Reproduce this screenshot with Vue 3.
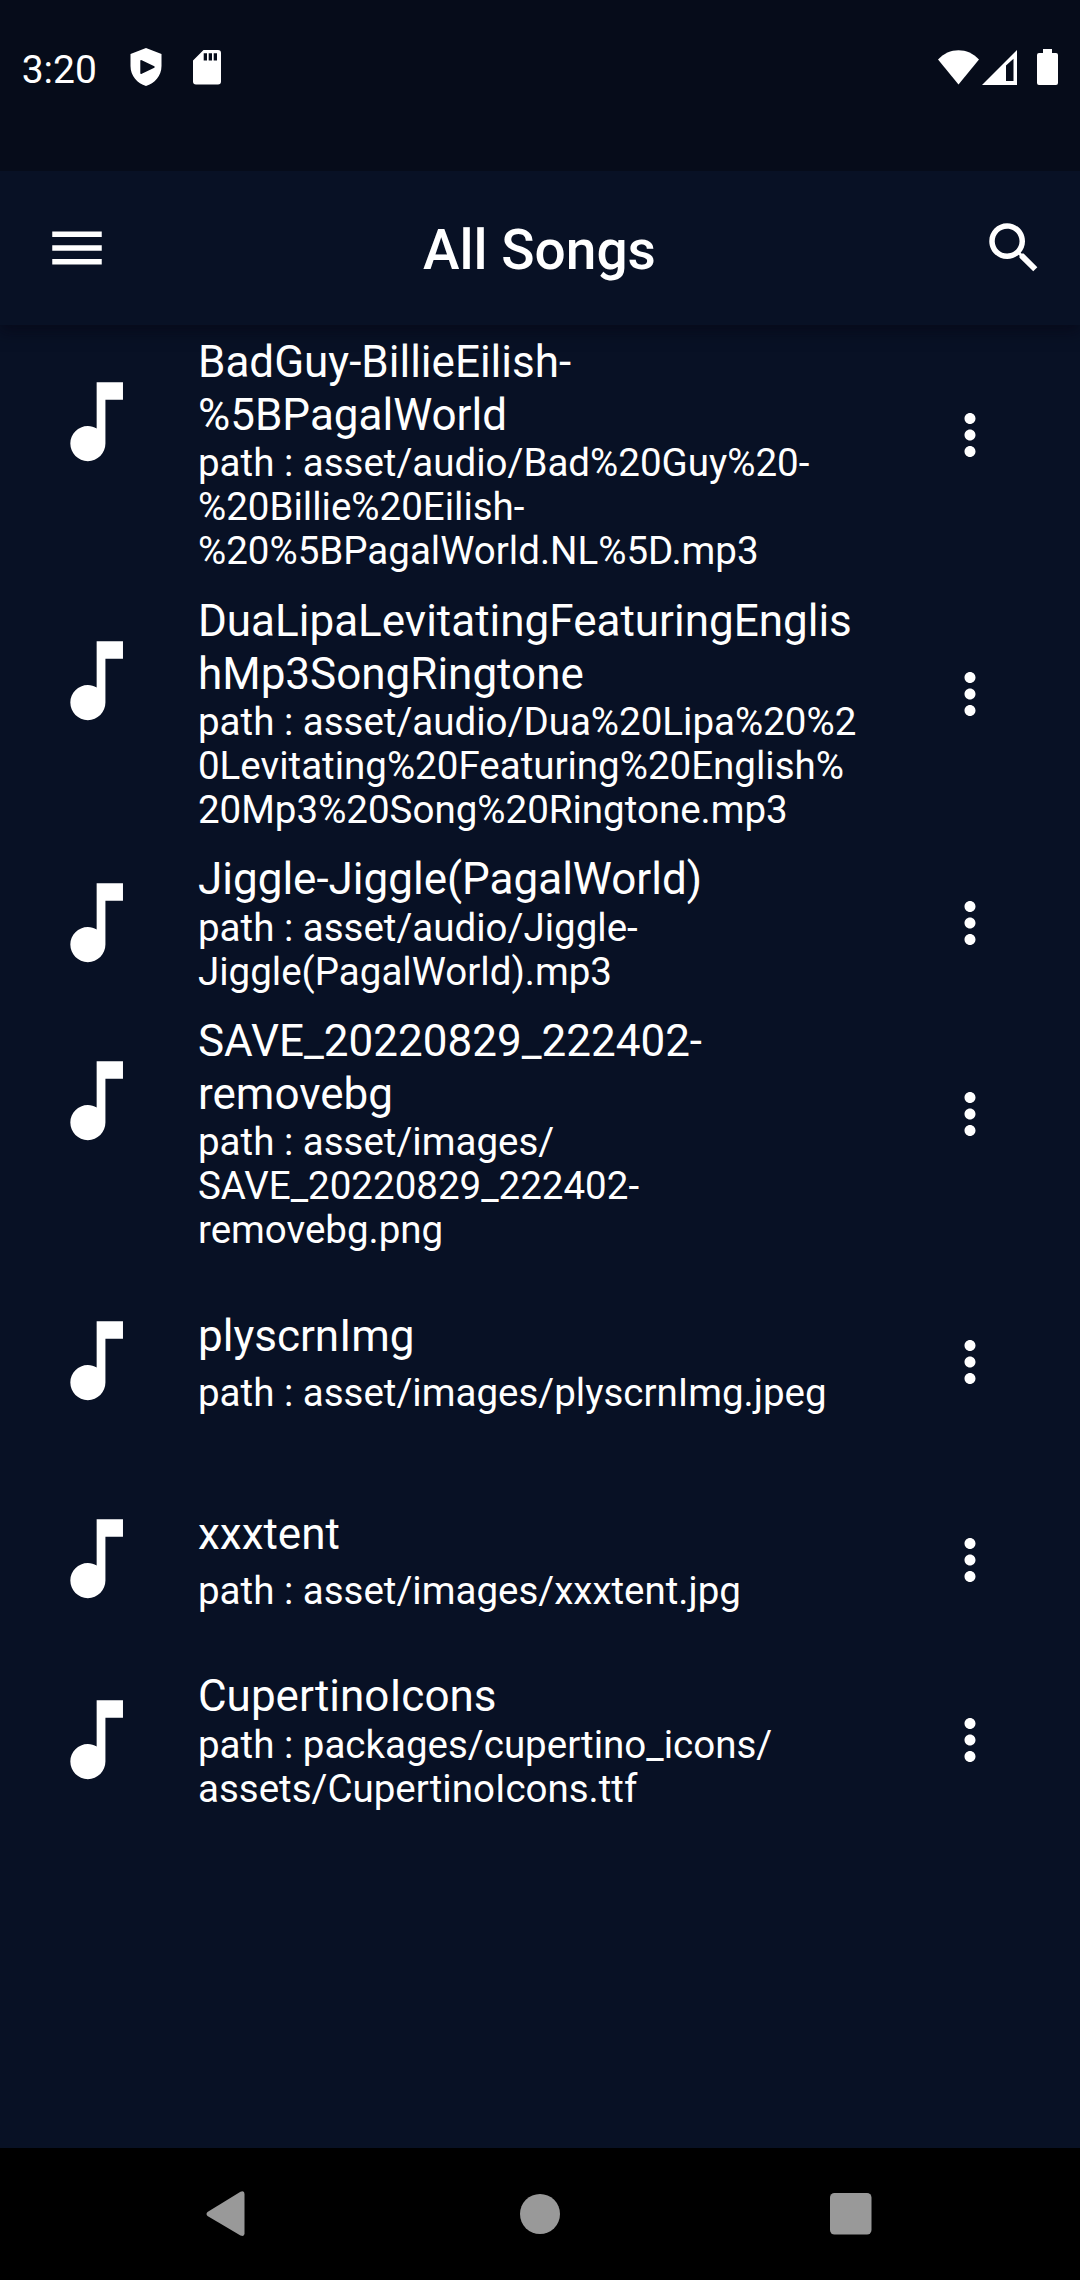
<script setup>
const songs = [
  { title: ['BadGuy-BillieEilish-', '%5BPagalWorld'], path: ['path : asset/audio/Bad%20Guy%20-', '%20Billie%20Eilish-', '%20%5BPagalWorld.NL%5D.mp3'], kind: 'tall' },
  { title: ['DuaLipaLevitatingFeaturingEnglis', 'hMp3SongRingtone'], path: ['path : asset/audio/Dua%20Lipa%20%2', '0Levitating%20Featuring%20English%', '20Mp3%20Song%20Ringtone.mp3'], kind: 'tall tight' },
  { title: ['Jiggle-Jiggle(PagalWorld)'], path: ['path : asset/audio/Jiggle-', 'Jiggle(PagalWorld).mp3'], kind: 'medium' },
  { title: ['SAVE_20220829_222402-', 'removebg'], path: ['path : asset/images/', 'SAVE_20220829_222402-', 'removebg.png'], kind: 'tall' },
  { title: ['plyscrnImg'], path: ['path : asset/images/plyscrnImg.jpeg'], kind: 'short' },
  { title: ['xxxtent'], path: ['path : asset/images/xxxtent.jpg'], kind: 'short' },
  { title: ['CupertinoIcons'], path: ['path : packages/cupertino_icons/', 'assets/CupertinoIcons.ttf'], kind: 'medium' },
]
</script>

<template>
  <div class="screen">
    <header class="status">
      <span class="clock">3:20</span>
      <svg class="shield" width="32" height="38" viewBox="0 0 32 38"><path fill="#fff" fill-rule="evenodd" d="M16 0 31.500 6V18C31.500 28 24.500 35.500 16 38 7.500 35.500.5 28 .5 18V6ZM11.800 12.300q-1.500-.8-1.500.8v11.800q0 1.500 1.500.8L24.300 19.800q1-.8 0-1.600Z"/></svg>
      <svg class="sd" width="28" height="35" viewBox="0 0 28 35"><path fill="#fff" fill-rule="evenodd" d="M10.500 0H25q3 0 3 3V31.500q0 3-3 3H3q-3 0-3-3V10.500ZM10.700 3.300v7.200h3.300V3.300ZM15.700 3.300v7.200h3.300V3.300ZM20.700 3.300v7.200h3.300V3.300Z"/></svg>
      <span class="grow"></span>
      <svg class="wifi" width="41" height="35" viewBox="0 0 41 35"><path fill="#fff" d="M0 9.500C11-3 30-3 41 9.500L20.500 34.500Z"/></svg>
      <svg class="signal" width="35" height="35" viewBox="0 0 35 35"><path fill="#fff" fill-rule="evenodd" d="M0 35 35 0V35ZM24 15.500V31H31.500V8.800Z"/></svg>
      <svg class="battery" width="21" height="36" viewBox="0 0 21 36"><path fill="#fff" d="M6 0h9v4h4q2 0 2 2V34q0 2-2 2H2q-2 0-2-2V6q0-2 2-2H6Z"/></svg>
    </header>
    <div class="appbar">
      <svg class="icon" viewBox="0 0 24 24"><path fill="#fff" d="M3 18h18v-2H3v2zm0-5h18v-2H3v2zm0-7v2h18V6H3z"/></svg>
      <h1>All Songs</h1>
      <svg class="icon" viewBox="0 0 24 24"><path fill="#fff" d="M15.500 14h-.79l-.28-.27C15.410 12.590 16 11.110 16 9.500 16 5.910 13.090 3 9.500 3S3 5.910 3 9.500 5.910 16 9.500 16c1.610 0 3.090-.59 4.230-1.570l.27.28v.79l5 4.990L20.490 19l-4.990-5zm-6 0C7.010 14 5 11.990 5 9.500S7.010 5 9.500 5 14 7.010 14 9.500 11.990 14 9.500 14z"/></svg>
    </div>
    <main class="list">
      <div v-for="song in songs" :key="song.title[0]" class="row" :class="song.kind">
        <svg class="note" viewBox="0 0 24 24"><path fill="#fff" d="M12 3v10.550c-.59-.34-1.270-.55-2-.55-2.210 0-4 1.790-4 4s1.790 4 4 4 4-1.790 4-4V7h4V3h-6z"/></svg>
        <div class="text">
          <div class="title"><div v-for="line in song.title" :key="line">{{ line }}</div></div>
          <div class="path"><div v-for="line in song.path" :key="line">{{ line }}</div></div>
        </div>
        <div class="more">
          <svg class="icon" viewBox="0 0 24 24"><path fill="#fff" d="M12 8c1.100 0 2-.9 2-2s-.9-2-2-2-2 .9-2 2 .9 2 2 2zm0 2c-1.100 0-2 .9-2 2s.9 2 2 2 2-.9 2-2-.9-2-2-2zm0 6c-1.100 0-2 .9-2 2s.9 2 2 2 2-.9 2-2-.9-2-2-2z"/></svg>
        </div>
      </div>
    </main>
    <nav class="nav">
      <svg class="back" width="40" height="46" viewBox="0 0 40 46"><path fill="#999" d="M1.500 21 34.500.8Q38.500-.8 38.500 3V42.500Q38.500 46 34.500 44.500L1.500 25Q-.5 23 1.500 21Z"/></svg>
      <svg class="home" width="40" height="40" viewBox="0 0 40 40"><circle cx="20" cy="20" r="20" fill="#999"/></svg>
      <svg class="recent" width="42" height="42" viewBox="0 0 42 42"><rect width="41.500" height="41.500" rx="4.500" fill="#999"/></svg>
    </nav>
  </div>
</template>

<style>
body { margin: 0; background: #081125; }
</style>

<style scoped>
.screen { display: flex; flex-direction: column; width: 1080px; height: 2280px; overflow: hidden; background: #081125; color: #fff; font-family: Roboto, sans-serif; }
.status { display: flex; align-items: flex-start; box-sizing: border-box; height: 171px; padding: 47px 22px 0 21.700px; background: #060c1a; }
.clock { width: 77.300px; font-size: 39px; line-height: 46px; }
.shield { margin: 1px 0 0 31.300px; }
.sd { margin: 3px 0 0 31px; }
.grow { flex: 1; }
.wifi { margin-top: 3px; }
.signal { margin: 3px 0 0 3px; }
.battery { margin: 2px 0 0 20px; }
.appbar { display: flex; align-items: center; box-sizing: border-box; height: 154px; padding: 0 33px 0 44px; background: #081125; box-shadow: 0 6px 14px rgba(6, 5, 20, .6); clip-path: inset(0 0 -30px 0); }
.appbar h1 { flex: 1; margin: 0; padding: 4px 12px 0 0; font-size: 55px; line-height: 66px; font-weight: 500; text-align: center; }
.icon { display: block; flex: none; width: 66px; height: 66px; }
.list { flex: 1; }
.row { display: flex; align-items: flex-start; box-sizing: border-box; padding: 0 44px; }
.note { flex: none; width: 105.300px; height: 105.300px; }
.more { flex: none; display: flex; justify-content: center; width: 132px; }
.text { flex: 1; margin-left: 48.700px; padding-top: 11px; white-space: nowrap; }
.title { font-size: 44px; line-height: 52px; }
.title > div { height: 53px; }
.path { font-size: 38.500px; line-height: 45px; }
.path > div { height: 44px; }
.tall { height: 259px; }
.tall.tight { height: 258px; }
.tall .path { margin-top: -2px; }
.tall .note { margin-top: 44px; }
.tall .more { margin-top: 77px; }
.medium { height: 162px; }
.medium .path { margin-top: -1px; }
.medium .note { margin-top: 28px; }
.medium .more { margin-top: 48px; }
.short { height: 198px; }
.short .text { padding-top: 47px; }
.short .path { margin-top: 7px; }
.short .note { margin-top: 44.500px; }
.short .more { margin-top: 66px; }
.nav { display: flex; align-items: center; box-sizing: border-box; height: 132px; padding-left: 206px; background: #000; }
.home { margin-left: 274px; }
.recent { margin-left: 270px; }
</style>
